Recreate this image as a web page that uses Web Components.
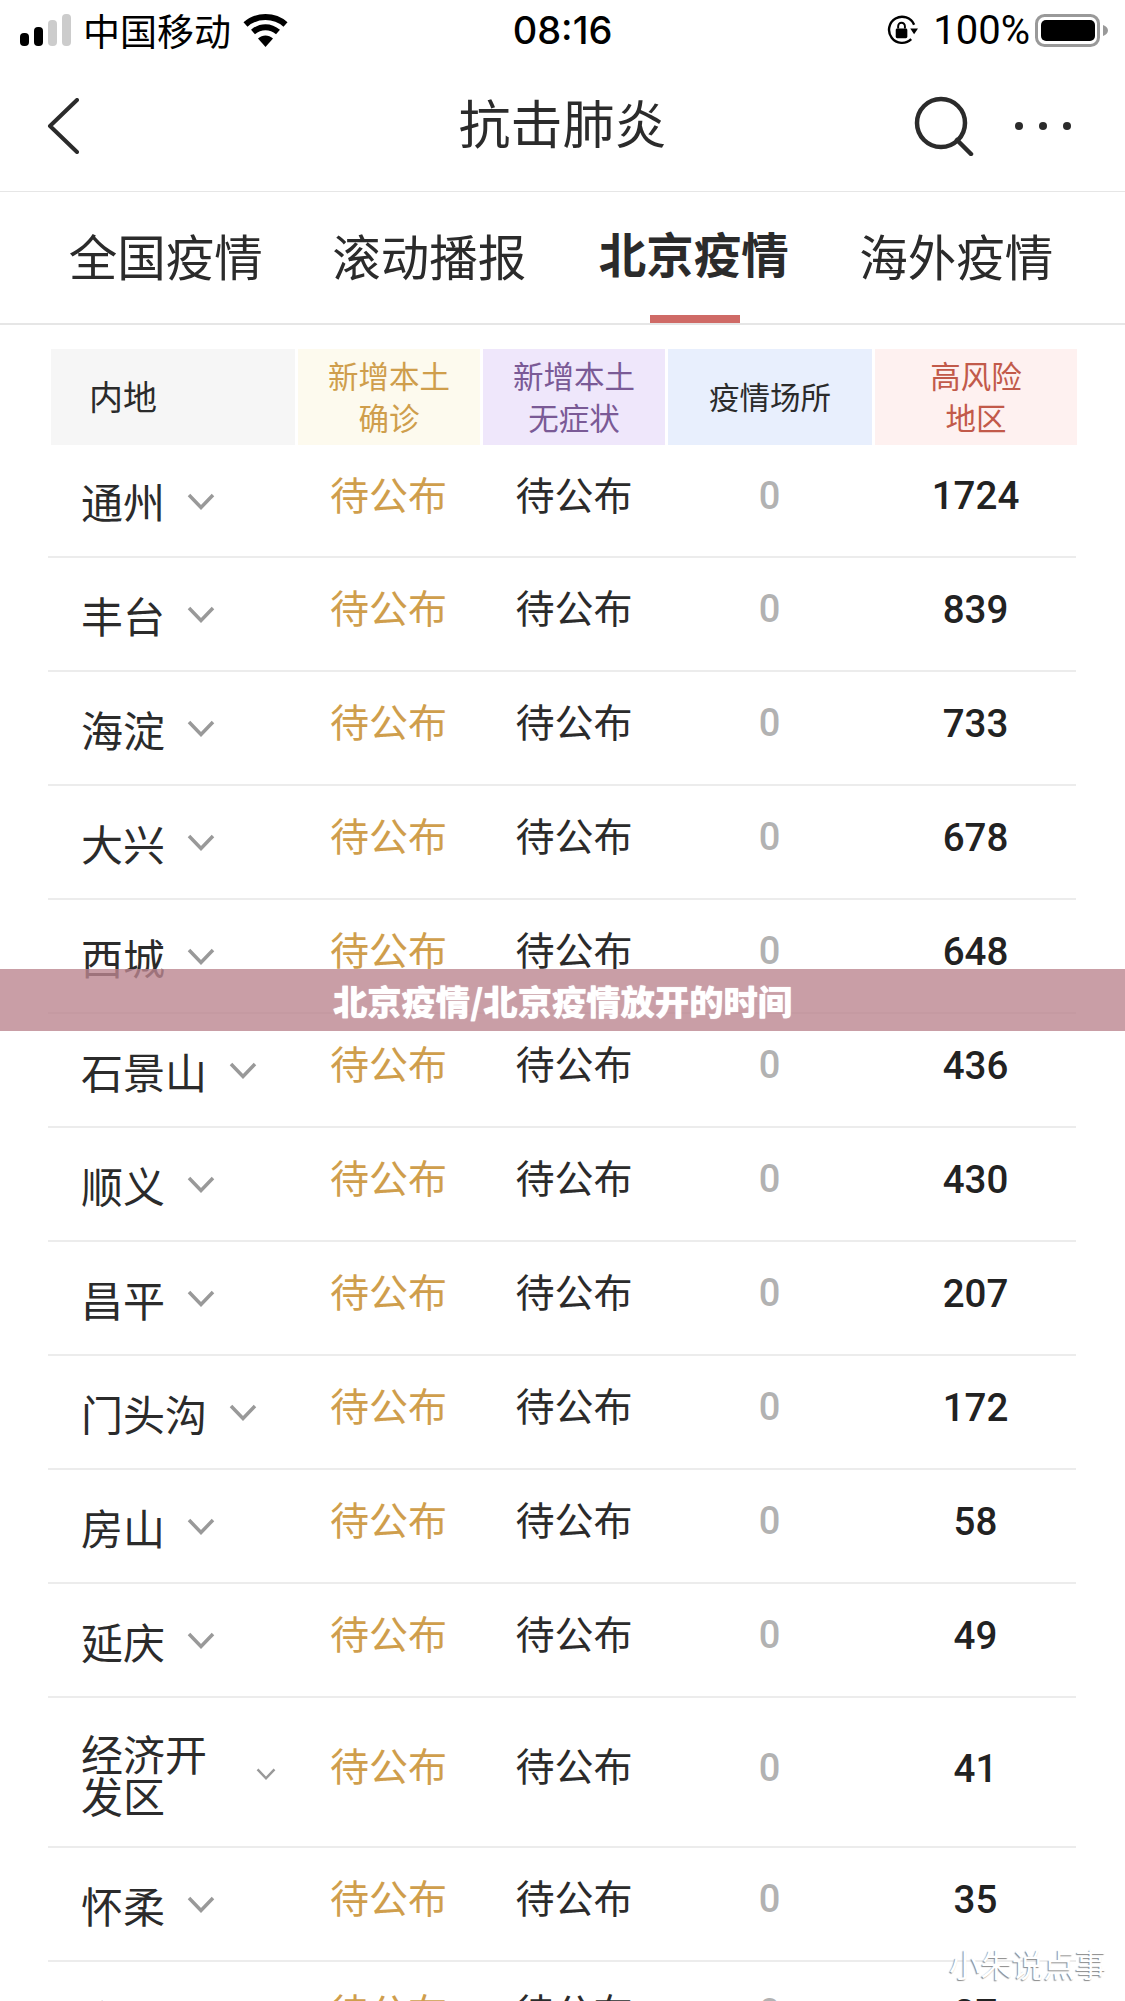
<!DOCTYPE html>
<html lang="zh-CN">
<head>
<meta charset="UTF-8">
<title>北京疫情</title>
<style>
	html, body { margin: 0; height: 2001px; overflow: hidden; background: #fff; }
	body { position: relative; font-family: "Noto Sans CJK SC", "Liberation Sans", sans-serif; color: #222; }
</style>
</head>
<body>

<status-bar></status-bar>
<nav-bar>抗击肺炎</nav-bar>
<tab-strip></tab-strip>
<table-head></table-head>
<district-row first name="通州" count="1724"></district-row>
<district-row name="丰台" count="839"></district-row>
<district-row name="海淀" count="733"></district-row>
<district-row name="大兴" count="678"></district-row>
<district-row name="西城" count="648"></district-row>
<district-row name="石景山" count="436"></district-row>
<district-row name="顺义" count="430"></district-row>
<district-row name="昌平" count="207"></district-row>
<district-row name="门头沟" count="172"></district-row>
<district-row name="房山" count="58"></district-row>
<district-row name="延庆" count="49"></district-row>
<district-row name="经济开发区" count="41" tall></district-row>
<district-row name="怀柔" count="35"></district-row>
<district-row name="密云" count="27"></district-row>
<title-banner>北京疫情/北京疫情放开的时间</title-banner>
<water-mark>小朱说点事</water-mark>

<script>
	const CJK = '"Noto Sans CJK SC", "Liberation Sans", sans-serif';

	class StatusBar extends HTMLElement
	{
		constructor() {
			super();
			this.attachShadow({mode: 'open'}).innerHTML = `
			<style>
				:host { display: grid; grid-template-columns: 1fr auto 1fr; align-items: center; height: 60px; padding: 0 20px; box-sizing: border-box; color: #000; font: 37px ${CJK}; }
				.side { display: flex; align-items: center; }
				.right { justify-content: flex-end; margin-right: -3px; }
				.time { font: 500 38px Inter, sans-serif; }
				.pct { font: 400 40px Roboto, sans-serif; margin: 0 5px 0 15px; }
				svg { display: block; }
			</style>
			<div class="side">
				<svg width="51" height="32" viewBox="0 0 51 32">
					<rect x="0" y="19" width="9" height="13" rx="4" fill="#000"/>
					<rect x="14" y="13" width="9" height="19" rx="4" fill="#000"/>
					<rect x="28" y="6" width="9" height="26" rx="4" fill="#ccc"/>
					<rect x="42" y="0" width="9" height="32" rx="4" fill="#ccc"/>
				</svg>
				<span style="margin-left:12px">中国移动</span>
				<svg style="margin-left:12px" width="45" height="33" viewBox="0 0 45 33">
					<path d="M2.500 10.500C13.500 .5 31.500 .5 42.500 10.500" fill="none" stroke="#000" stroke-width="6"/>
					<path d="M10 18C17.500 11.500 27.500 11.500 35 18" fill="none" stroke="#000" stroke-width="6"/>
					<path d="M15 24.500C19.500 20.500 25.500 20.500 30 24.500L22.500 33Z" fill="#000"/>
				</svg>
			</div>
			<div class="time">08:16</div>
			<div class="side right">
				<svg width="31" height="30" viewBox="0 0 32 31">
					<path d="M25 25A13.500 13.500 0 1 1 28 10" fill="none" stroke="#000" stroke-width="2.500"/>
					<path d="M24 14h8l-4 6z" fill="#000"/>
					<rect x="9" y="14" width="12" height="10" rx="1.500" fill="#000"/>
					<path d="M11.500 14v-2.500a3.500 3.500 0 0 1 7 0V14" fill="none" stroke="#000" stroke-width="2"/>
				</svg>
				<span class="pct">100%</span>
				<svg width="73" height="33" viewBox="0 0 73 33">
					<rect x="1.500" y="1.500" width="62" height="30" rx="8" fill="none" stroke="#999" stroke-width="3"/>
					<rect x="6" y="6" width="54" height="21" rx="5" fill="#000"/>
					<path d="M68 11c3 1 5 3 5 5.500s-2 4.500-5 5.500z" fill="#999"/>
				</svg>
			</div>`;
		}
	}

	class NavBar extends HTMLElement
	{
		constructor() {
			super();
			this.attachShadow({mode: 'open'}).innerHTML = `
			<style>
				:host { display: grid; grid-template-columns: 1fr auto 1fr; align-items: center; height: 132px; padding: 0 46px; box-sizing: border-box; border-bottom: 1px solid #e6e6e6; }
				.title { font: 400 52px ${CJK}; color: #2b2b2b; padding-bottom: 8px; }
				.right { display: flex; justify-content: flex-end; align-items: center; gap: 41px; margin-right: 8px; }
				svg { display: block; }
			</style>
			<div>
				<svg width="33" height="56" viewBox="0 0 33 56"><path d="M31 2L4 28L31 54" fill="none" stroke="#2b2b2b" stroke-width="4" stroke-linecap="round" stroke-linejoin="round"/></svg>
			</div>
			<div class="title"><slot></slot></div>
			<div class="right">
				<svg width="60" height="60" viewBox="0 0 60 60">
					<circle cx="27" cy="27" r="24" fill="none" stroke="#2b2b2b" stroke-width="4.500"/>
					<path d="M43 44L57 58" stroke="#2b2b2b" stroke-width="4.500" stroke-linecap="round"/>
				</svg>
				<svg width="56" height="8" viewBox="0 0 56 8">
					<circle cx="4" cy="4" r="4" fill="#2b2b2b"/><circle cx="28" cy="4" r="4" fill="#2b2b2b"/><circle cx="52" cy="4" r="4" fill="#2b2b2b"/>
				</svg>
			</div>`;
		}
	}

	class TabStrip extends HTMLElement
	{
		constructor() {
			super();
			this.attachShadow({mode: 'open'}).innerHTML = `
			<style>
				:host { display: grid; grid-template-columns: repeat(4, 263.500px); height: 133px; padding-left: 34px; justify-content: start; border-bottom: 2px solid #e6e6e6; box-sizing: border-box; font: 400 48.500px ${CJK}; color: #2b2b2b; }
				div { position: relative; display: flex; justify-content: center; padding-top: 28px; line-height: 70px; }
				.on { font-weight: 700; font-size: 47.500px; padding: 26px 0 0 2px; box-sizing: border-box; }
				.on::after { content: ""; position: absolute; left: 89px; bottom: 0; width: 90px; height: 8px; background: #cf6a66; }
			</style>
			<div>全国疫情</div><div>滚动播报</div><div class="on">北京疫情</div><div>海外疫情</div>`;
		}
	}

	class TableHead extends HTMLElement
	{
		constructor() {
			super();
			this.attachShadow({mode: 'open'}).innerHTML = `
			<style>
				:host { display: grid; grid-template-columns: 244px 182px 182px 204px 202px; column-gap: 3px; height: 96px; margin: 24px 0 0 51px; width: 1026px; font: 400 30.500px/42px ${CJK}; text-align: center; }
				div { display: flex; align-items: center; justify-content: center; padding-bottom: 2px; box-sizing: border-box; }
				.name { background: #f6f6f6; color: #2b2b2b; font-size: 34px; justify-content: flex-start; padding-left: 38px; }
				.gold { background: #fdfaee; color: #cf9e4c; }
				.purple { background: #efe7fb; color: #7a5a96; }
				.blue { background: #e8effd; color: #2b2b2b; }
				.red { background: #fef1f0; color: #c25a4a; }
			</style>
			<div class="name">内地</div>
			<div class="gold">新增本土<br>确诊</div>
			<div class="purple">新增本土<br>无症状</div>
			<div class="blue">疫情场所</div>
			<div class="red">高风险<br>地区</div>`;
		}
	}

	class DistrictRow extends HTMLElement
	{
		connectedCallback() {
			const name = this.getAttribute('name');
			const tall = this.hasAttribute('tall');
			const label = tall ? `${name.slice(0, 3)}<br>${name.slice(3)}` : name;
			this.attachShadow({mode: 'open'}).innerHTML = `
			<style>
				:host { display: grid; grid-template-columns: 248px 185px 186px 205px 203px; height: 114px; margin-left: 48px; width: 1028px; box-sizing: border-box; border-bottom: 2px solid #ececec; text-align: center; font: 400 39px ${CJK}; color: #2b2b2b; }
				:host([first]) { height: 113px; }
				:host([tall]) { height: 150px; }
				div { display: flex; align-items: center; justify-content: center; padding-bottom: 16px; box-sizing: border-box; }
				.name { justify-content: flex-start; padding: 1px 0 0 33px; font-size: 42px; line-height: 42px; text-align: left; }
				:host([tall]) .name { padding: 4px 0 0 33px; }
				.name span { flex: none; }
				svg { display: block; flex: none; margin-left: 22px; }
				:host([tall]) svg { margin-left: 49px; width: 20px; height: 12px; }
				.gold { color: #cf9e4c; }
				.zero, .num { padding-bottom: 10px; }
				:host([tall]) .zero, :host([tall]) .num { padding-bottom: 8px; }
				.zero { color: #b2b2b2; font: 500 38px Roboto, sans-serif; }
				.num { font: 500 38.500px Roboto, sans-serif; color: #222; padding-left: 4px; }
			</style>
			<div class="name"><span>${label}</span><svg width="28" height="17" viewBox="0 0 28 17"><path d="M2 2L14 14.500L26 2" fill="none" stroke="#999" stroke-width="3.500"/></svg></div>
			<div class="gold">待公布</div>
			<div>待公布</div>
			<div class="zero">0</div>
			<div class="num">${this.getAttribute('count')}</div>`;
		}
	}

	class TitleBanner extends HTMLElement
	{
		constructor() {
			super();
			this.attachShadow({mode: 'open'}).innerHTML = `
			<style>
				:host { position: absolute; left: 0; right: 0; top: 969px; height: 62px; display: flex; align-items: center; justify-content: center; background: rgba(187, 134, 144, .8); color: #fff; font: 900 34.300px ${CJK}; text-shadow: 0 0 1px #fff; }
			</style>
			<slot></slot>`;
		}
	}

	class WaterMark extends HTMLElement
	{
		constructor() {
			super();
			this.attachShadow({mode: 'open'}).innerHTML = `
			<style>
				:host { position: absolute; left: 949px; top: 1943px; color: #fff; font: 400 31.500px/40px ${CJK}; text-shadow: -1px 1px 1px #8a8a8a; }
			</style>
			<slot></slot>`;
		}
	}

	customElements.define('status-bar', StatusBar);
	customElements.define('nav-bar', NavBar);
	customElements.define('tab-strip', TabStrip);
	customElements.define('table-head', TableHead);
	customElements.define('district-row', DistrictRow);
	customElements.define('title-banner', TitleBanner);
	customElements.define('water-mark', WaterMark);
</script>

</body>
</html>
